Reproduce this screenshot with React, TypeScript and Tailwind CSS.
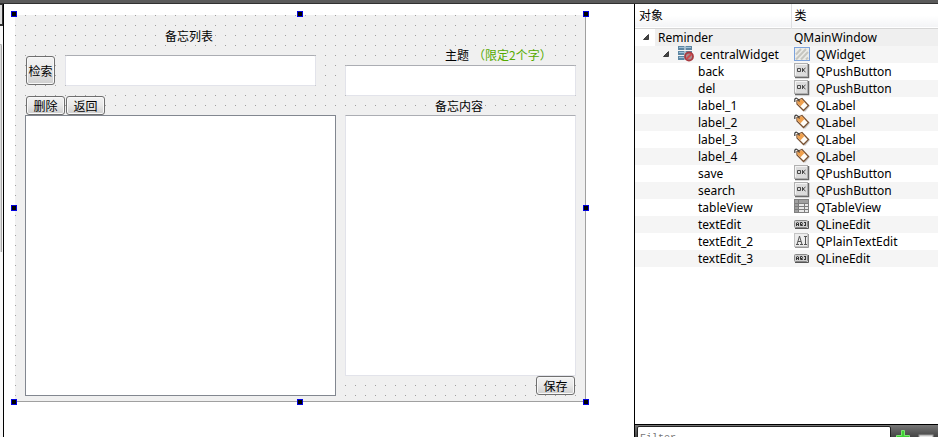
import React from "react";

type IconKind = "widget" | "button" | "label" | "table" | "line" | "plain";

const rows: { name: string; cls: string; icon: IconKind }[] = [
  { name: "back", cls: "QPushButton", icon: "button" },
  { name: "del", cls: "QPushButton", icon: "button" },
  { name: "label_1", cls: "QLabel", icon: "label" },
  { name: "label_2", cls: "QLabel", icon: "label" },
  { name: "label_3", cls: "QLabel", icon: "label" },
  { name: "label_4", cls: "QLabel", icon: "label" },
  { name: "save", cls: "QPushButton", icon: "button" },
  { name: "search", cls: "QPushButton", icon: "button" },
  { name: "tableView", cls: "QTableView", icon: "table" },
  { name: "textEdit", cls: "QLineEdit", icon: "line" },
  { name: "textEdit_2", cls: "QPlainTextEdit", icon: "plain" },
  { name: "textEdit_3", cls: "QLineEdit", icon: "line" },
];

function ClassIcon({ kind }: { kind: IconKind }) {
  return (
    <svg width="16" height="16" viewBox="0 0 16 16" className="shrink-0" aria-hidden="true">
      {kind === "widget" && (
        <>
          <rect x="0.5" y="1.5" width="15" height="13" fill="#ecece8" stroke="#7ba2dc" />
          <path d="M2 8.5L7 3M2 13.5L12 3M7 13.5L14 6M12 13.5L14 11.5" stroke="#c6c6c0" strokeWidth="2" />
        </>
      )}
      {kind === "button" && (
        <>
          <path d="M1 14.5H14.5V1" fill="none" stroke="#6a6a6a" strokeWidth="1.5" />
          <rect x="0.5" y="0.5" width="13" height="13" fill="#dcdcdc" stroke="#b0b0b0" />
          <path d="M1.5 12V1.5H13" fill="none" stroke="#f4f4f4" />
          <path d="M3.5 5.5H6.5V8.5H3.5ZM8.5 5V9M11.5 5L9 7L11.5 9" fill="none" stroke="#4a4a4a" />
        </>
      )}
      {kind === "label" && (
        <>
          <path d="M5 9L11 15L16 9L14 7Z" fill="#999" opacity="0.5" />
          <path d="M3 3.5L8 1.5L14.5 8.5L9.5 13.5L3 7Z" fill="#fffdf8" stroke="#795131" strokeWidth="1.3" />
          <path d="M3.5 4L7.8 2.3L10.5 5L6.5 9.2L3.5 6.5Z" fill="#f0a14e" />
          <path d="M5.5 4.5C4 0.5 0.8 0.5 0.8 2.5V5" fill="none" stroke="#393939" strokeWidth="1.2" />
        </>
      )}
      {kind === "table" && (
        <>
          <rect x="0.5" y="0.5" width="14" height="13" fill="#e8e8e8" stroke="#808080" />
          <path d="M1 1H14V4H5V13H1Z" fill="#a0a0a0" />
          <path d="M1 4.5H14M1 7.5H14M1 10.5H14M4.5 1V13M10.5 4V13" stroke="#7c7c7c" />
        </>
      )}
      {kind === "line" && (
        <>
          <path d="M1 12.5H14.5V5" fill="none" stroke="#555" />
          <rect x="0.5" y="4.5" width="13" height="7" rx="1" fill="#cfcfcf" stroke="#888" />
          <path d="M2.5 10V7L3.5 6.5L4.5 7V10M3 8.5H4M6.5 6.5H8L8.5 7.5L8 8.5H6.5H8L8.5 9.5H6.5ZM10 6.5H12M11.5 6.5V9.5M10 9.5H12" fill="none" stroke="#333" />
        </>
      )}
      {kind === "plain" && (
        <>
          <path d="M1 14.5H14.5V1" fill="none" stroke="#999" />
          <rect x="0.5" y="0.5" width="13" height="13" fill="#ececec" stroke="#c4c4c4" />
          <path d="M2 11.5H5M6 11.5H9M3 11.5L5.5 3L8 11.5M4 8.5H7M10 3.5H13M11.5 3.5V11.5M10 11.5H13" fill="none" stroke="#555" />
        </>
      )}
    </svg>
  );
}

function CentralIcon() {
  return (
    <svg width="16" height="16" viewBox="0 0 16 16" className="shrink-0" aria-hidden="true">
      <path d="M0 0H6.5V4H0ZM7.5 0H14V4H7.5ZM0 5H6.5V9H0ZM7.5 5H14V9H7.5ZM0 10H6.5V14H0Z" fill="#5d86a3" />
      <path d="M1 1.5H6M8 1.5H13M1 6.5H6M8 6.5H13M1 11.5H6" stroke="#9cc0d8" />
      <circle cx="11" cy="10.5" r="4" fill="#a98d90" stroke="#a83a40" strokeWidth="1.8" />
      <path d="M8.5 13L13.5 8" stroke="#d0484c" strokeWidth="2" />
    </svg>
  );
}

function Expander({ label }: { label: string }) {
  return (
    <button type="button" aria-label={label} aria-expanded="true" className="block h-[17px] w-2 shrink-0">
      <svg width="8" height="17" viewBox="0 0 8 17" aria-hidden="true">
        <path d="M5.5 5.5V10.5H0.5Z" fill="#444" stroke="#222" strokeWidth="0.8" />
      </svg>
    </button>
  );
}

const formButton =
  "rounded-[3px] border border-[#707070] bg-linear-to-b from-[#f3f3f3] via-[#e8e8e8] to-[#cecece] text-center shadow-[inset_0_0_0_1px_#f8f8f8]";
const lineField = "block h-[31px] rounded-[2px] border border-[#e2e3ea] border-t-[#abadb3] bg-white px-1 outline-none";

const handles = [
  "-left-1 -top-1",
  "left-1/2 -top-1 -translate-x-1/2",
  "-right-1 -top-1",
  "-left-1 top-1/2 -translate-y-1/2",
  "-right-1 top-1/2 -translate-y-1/2",
  "-left-1 -bottom-1",
  "left-1/2 -bottom-1 -translate-x-1/2",
  "-right-1 -bottom-1",
];

function FormCanvas() {
  return (
    <form
      onSubmit={(e) => e.preventDefault()}
      className="relative flex w-[571px] gap-[9px] border-r border-b border-[#a0a0a0] bg-[#f0f0f0] bg-[linear-gradient(to_bottom,transparent_1px,#f0f0f0_1px),linear-gradient(to_right,#a0a0a0_1px,#f0f0f0_1px)] bg-size-[10px_10px] pr-[9px] pb-[5px] pl-[10px] text-xs leading-4"
    >
      <div className="flex w-[311px] flex-col">
        <h1 className="mt-[13px] h-[27px] pl-[140px]">
          <span className="bg-[#f0f0f0]">备忘列表</span>
        </h1>
        <div className="flex gap-[10px] pl-px">
          <button type="button" className={`${formButton} mt-px size-[29px]`}>检索</button>
          <input aria-label="检索" className={`${lineField} w-[251px]`} />
        </div>
        <div className="mt-[10px] flex gap-px pl-px">
          <button type="button" className={`${formButton} h-[19px] w-[39px]`}>删除</button>
          <button type="button" className={`${formButton} h-[19px] w-[39px]`}>返回</button>
        </div>
        <div role="region" aria-label="备忘列表" className="h-[281px] border border-[#828790] bg-white" />
      </div>
      <div className="flex w-[231px] flex-col">
        <label htmlFor="subject" className="mt-8 flex h-[18px] gap-1 pl-[100px]">
          <span className="bg-[#f0f0f0]">主题</span>
          <span className="bg-[#f0f0f0] text-[#55aa00]">（限定2个字）</span>
        </label>
        <input id="subject" className={`${lineField} w-full`} />
        <label htmlFor="content" className="mt-[2px] h-[17px] pl-[90px]">
          <span className="bg-[#f0f0f0]">备忘内容</span>
        </label>
        <textarea
          id="content"
          className="block h-[261px] w-full resize-none border border-[#e2e3ea] border-t-[#abadb3] bg-white outline-none"
        />
        <button type="button" className={`${formButton} mr-px h-[19px] w-[39px] self-end`}>保存</button>
      </div>
      {handles.map((place) => (
        <span key={place} className={`absolute size-[6px] border border-[#0000dd] bg-black ${place}`} />
      ))}
    </form>
  );
}

function ObjectTree() {
  return (
    <table className="w-full table-fixed border-collapse text-xs leading-[17px]">
      <colgroup>
        <col className="w-[156px]" />
        <col />
      </colgroup>
      <thead>
        <tr className="h-6 border-b border-[#d5d5d5] bg-linear-to-b from-white from-50% to-[#f3f4f6] text-left">
          <th className="border-r border-[#dedfe1] pl-1 font-normal">对象</th>
          <th className="pl-[3px] font-normal">类</th>
        </tr>
      </thead>
      <tbody>
        <tr className="h-[17px]">
          <td className="p-0">
            <div className="flex pl-2">
              <Expander label="Reminder" />
              <span className="ml-1 flex-1 bg-[#efefef] pl-[3px]">Reminder</span>
            </div>
          </td>
          <td className="bg-[#efefef] py-0 pl-[3px]">QMainWindow</td>
        </tr>
        <tr className="h-[17px] bg-[#f5f5f5]">
          <td className="p-0">
            <div className="flex pl-7">
              <Expander label="centralWidget" />
              <span className="ml-[7px] flex gap-[6px]"><CentralIcon />centralWidget</span>
            </div>
          </td>
          <td className="p-0"><div className="flex gap-[6px] pl-[3px]"><ClassIcon kind="widget" />QWidget</div></td>
        </tr>
        {rows.map((row) => (
          <tr key={row.name} className="h-[17px] bg-white even:bg-[#f5f5f5]">
            <td className="py-0 pl-[63px]">{row.name}</td>
            <td className="p-0"><div className="flex gap-[6px] pl-[3px]"><ClassIcon kind={row.icon} />{row.cls}</div></td>
          </tr>
        ))}
      </tbody>
    </table>
  );
}

export default function App() {
  return (
    <div className="flex h-screen flex-col overflow-hidden bg-white font-['Noto_Sans','Noto_Sans_CJK_SC',sans-serif] text-black">
      <header className="h-1 shrink-0 border-b border-[#303030] bg-[#5a5a5a]" />
      <div className="flex min-h-0 flex-1">
        <aside className="w-1 shrink-0 border-r border-black bg-[#f8f8f8]">
          <div className="h-[22px] border-t border-r border-b-2 border-[#333] bg-[#ddd]" />
          <div className="mt-[18px] h-[208px] w-[2px] rounded-tr border-t border-r border-[#aaa] bg-[#ddd]" />
        </aside>
        <main className="min-w-0 flex-1 overflow-hidden pt-[11px] pl-[11px] font-['Noto_Sans_CJK_SC',sans-serif]">
          <FormCanvas />
        </main>
        <section className="flex w-[304px] shrink-0 flex-col border-l border-black">
          <div className="min-h-0 flex-1">
            <ObjectTree />
          </div>
          <div className="flex h-[13px] shrink-0 overflow-hidden border-t border-black bg-linear-to-b from-[#777] to-[#444] pl-[2px]">
            <input
              aria-label="Filter"
              placeholder="Filter"
              className="mt-px h-6 w-[254px] shrink-0 rounded-[2px] border border-[#222] bg-white px-[2px] font-['Liberation_Mono',monospace] text-[10px] text-[#777] outline-none placeholder:text-[#777]"
            />
            <button type="button" aria-label="Add" className="ml-1 h-6 w-4 shrink-0">
              <svg width="16" height="20" viewBox="0 0 16 20" aria-hidden="true">
                <path d="M6.5 3.5H9.5V8.5H14.5V11.5H9.5V16.5H6.5V11.5H1.5V8.5H6.5Z" fill="#3fd035" stroke="#7be870" />
              </svg>
            </button>
            <button type="button" aria-label="Remove" className="ml-[7px] h-6 w-4 shrink-0">
              <svg width="16" height="20" viewBox="0 0 16 20" aria-hidden="true">
                <rect x="1" y="8" width="14" height="4" fill="#e5e5e5" stroke="#999" />
              </svg>
            </button>
          </div>
        </section>
      </div>
    </div>
  );
}
